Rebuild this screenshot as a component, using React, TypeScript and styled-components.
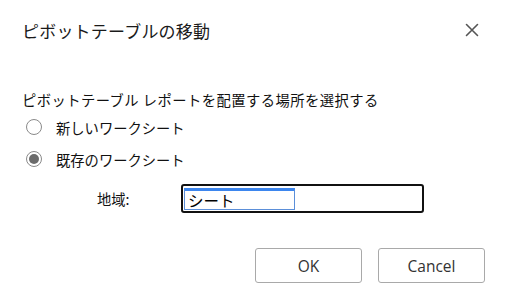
import React from "react";
import styled, { createGlobalStyle } from "styled-components";

const Global = createGlobalStyle`
  html, body { margin: 0; padding: 0; background: #fff; }
  body { width: 508px; height: 304px; overflow: hidden; font-family: "Noto Sans CJK JP", "Noto Sans", sans-serif; }
`;

const Dialog = styled.div`
  width: 508px;
  height: 304px;
  box-sizing: border-box;
  background: #fff;
  display: flex;
  flex-direction: column;
  padding: 0 22px;
  color: #111;
`;

const Header = styled.div`
  height: 60px;
  display: flex;
  align-items: center;
  justify-content: space-between;
`;

const Title = styled.div`
  font-size: 17px;
  color: #1a1a1a;
  letter-spacing: 0.2px;
`;

const Close = styled.button`
  width: 20px;
  height: 20px;
  border: none;
  background: none;
  padding: 0;
  margin-right: 4px;
  display: flex;
  align-items: center;
  justify-content: center;
  cursor: pointer;
`;

const Prompt = styled.div`
  margin-top: 27px;
  height: 24px;
  display: flex;
  align-items: center;
  font-size: 14.3px;
  letter-spacing: 0.45px;
  white-space: pre;
`;

const RadioRow = styled.label`
  height: 32px;
  display: flex;
  align-items: center;
  gap: 14px;
  padding-left: 4px;
  font-size: 14.3px;
`;

const RadioCircle = styled.span<{ $checked?: boolean }>`
  width: 16px;
  height: 16px;
  border-radius: 50%;
  border: 1px solid #8a8a8a;
  box-sizing: border-box;
  display: flex;
  align-items: center;
  justify-content: center;
  &::after {
    content: "";
    width: 10px;
    height: 10px;
    border-radius: 50%;
    background: ${(p) => (p.$checked ? "#6b6b6b" : "transparent")};
  }
`;

const RegionRow = styled.div`
  margin-top: 9px;
  height: 29px;
  display: flex;
  align-items: center;
`;

const RegionLabel = styled.span`
  width: 84px;
  padding-left: 75px;
  font-size: 14.3px;
`;

const InputBox = styled.div`
  width: 243px;
  height: 29px;
  box-sizing: border-box;
  border: 2px solid #111;
  border-radius: 3px;
  padding: 2px 0 0 1px;
  display: flex;
  align-items: flex-start;
`;

const Selection = styled.span`
  width: 111px;
  height: 22px;
  box-sizing: border-box;
  border: 1px solid #5b8fd9;
  border-top: 3px solid #3d86ee;
  font-size: 15.5px;
  line-height: 18px;
  padding-left: 3px;
  color: #000;
`;

const Footer = styled.div`
  margin-top: 35px;
  display: flex;
  justify-content: flex-end;
  gap: 16px;
  padding-right: 1px;
`;

const Button = styled.button`
  width: 107px;
  height: 35px;
  box-sizing: border-box;
  border: 1px solid #a9a9a9;
  border-radius: 3px;
  background: #fff;
  font-family: "Open Sans", "Noto Sans", sans-serif;
  font-size: 15.5px;
  color: #333;
  padding: 0;
`;

export default function App() {
  return (
    <>
      <Global />
      <Dialog>
        <Header>
          <Title>ピボットテーブルの移動</Title>
          <Close aria-label="close">
            <svg width="14" height="14" viewBox="0 0 14 14">
              <path d="M1.5 1.5 L12.5 12.5 M12.5 1.5 L1.5 12.5" stroke="#555" strokeWidth="1.6" strokeLinecap="round" />
            </svg>
          </Close>
        </Header>
        <Prompt>ピボットテーブル レポートを配置する場所を選択する</Prompt>
        <RadioRow>
          <RadioCircle />
          新しいワークシート
        </RadioRow>
        <RadioRow>
          <RadioCircle $checked />
          既存のワークシート
        </RadioRow>
        <RegionRow>
          <RegionLabel>地域:</RegionLabel>
          <InputBox>
            <Selection>シート</Selection>
          </InputBox>
        </RegionRow>
        <Footer>
          <Button>OK</Button>
          <Button>Cancel</Button>
        </Footer>
      </Dialog>
    </>
  );
}
